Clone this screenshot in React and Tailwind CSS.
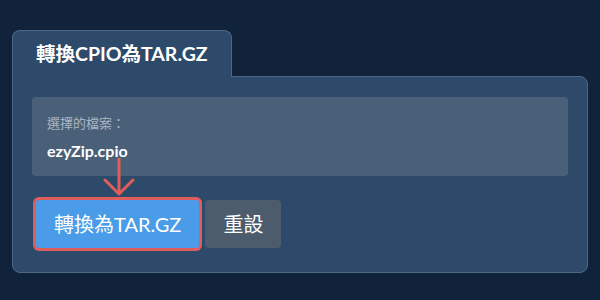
import React from 'react';

const font = { fontFamily: 'Lato, "Noto Sans CJK TC", sans-serif' };

const App = () => {
  return (
    <div className="w-[600px] h-[300px] bg-[#11233a] px-3 pt-[30px]" style={font}>
      {/* Tab */}
      <div className="relative z-10 -mb-px inline-block rounded-t-lg border border-b-0 border-[#4d6885] bg-[#2d4a6a] px-[23px] pt-[9px] pb-[9px]">
        <h1 className="text-[19.5px] leading-7 font-bold text-white">轉換CPIO為TAR.GZ</h1>
      </div>

      {/* Panel */}
      <div className="relative rounded-b-lg rounded-tr-lg border border-[#4d6885] bg-[#2d4a6a] px-[19px] pt-5 pb-6">
        <div className="rounded bg-[#4a6079] px-[15px] pt-4 pb-[13px]">
          <p className="text-[13px] leading-5 text-[#aab6c4]">選擇的檔案：</p>
          <p className="mt-1.5 text-base leading-6 font-bold text-white">ezyZip.cpio</p>
        </div>

        <svg className="absolute left-[90px] top-[81px]" width="32" height="38" viewBox="0 0 32 38" fill="none">
          <path d="M16 1V36M2 22L16 36L30 22" stroke="#e05d5a" strokeWidth="3" strokeLinecap="round" strokeLinejoin="round" />
        </svg>

        <div className="mt-6 flex items-center gap-1.5">
          <button className="ml-1 rounded-[3px] bg-[#4a9be8] px-[18px] py-3 text-[20px] leading-6 text-white ring-[3px] ring-[#e05d5d]">
            轉換為TAR.GZ
          </button>
          <button className="rounded bg-[#4c5c6d] px-[18px] py-3 text-[20px] leading-6 text-white">
            重設
          </button>
        </div>
      </div>
    </div>
  );
};

export default App;
